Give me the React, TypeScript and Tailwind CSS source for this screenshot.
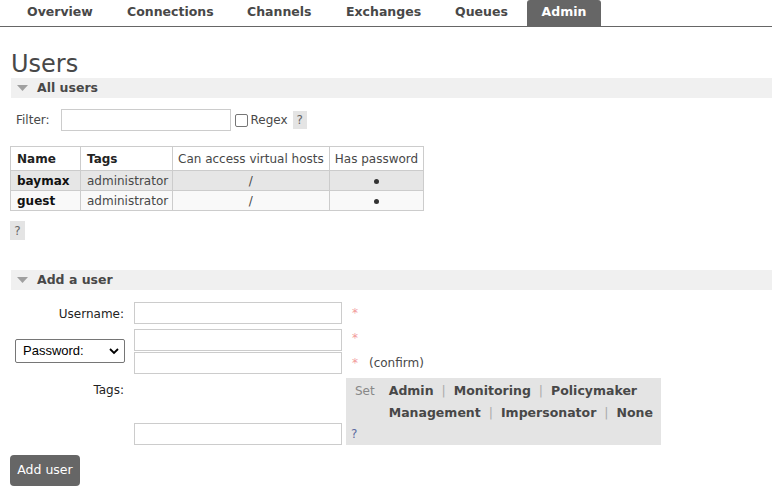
const tabs = [
  { label: "Overview", w: "w-[100px]" },
  { label: "Connections", w: "w-[120px]" },
  { label: "Channels", w: "w-[99px]" },
  { label: "Exchanges", w: "w-[109px]" },
  { label: "Queues", w: "w-[87px]" },
];

const users = [
  { name: "baymax", tags: "administrator", vhosts: "/", pw: true, shade: "bg-[#e6e6e6]" },
  { name: "guest", tags: "administrator", vhosts: "/", pw: true, shade: "bg-[#f9f9f9]" },
];

function SectionHeader({ title }: { title: string }) {
  return (
    <div className="flex items-center h-[20px] bg-[#f0f0f0] pl-[6px] gap-[9px]">
      <svg width="11" height="6" viewBox="0 0 11 6">
        <path d="M0 0 H11 L5.5 6 Z" fill="#a0a0a0" />
      </svg>
      <span className="font-bold text-[12.5px] text-[#484848]">{title}</span>
    </div>
  );
}

function Help({ className = "" }: { className?: string }) {
  return (
    <span className={`inline-flex items-center justify-center bg-[#e4e4e4] text-[#666] text-[12px] ${className}`}>?</span>
  );
}

const Star = () => <span className="text-[#f29a9a] text-[12px]">*</span>;
const Sep = () => <span className="text-[#aaa] font-normal mx-[8px]">|</span>;

export default function App() {
  return (
    <div className="w-[772px] h-[496px] overflow-hidden bg-white text-[#484848] font-['DejaVu_Sans',Verdana,sans-serif] text-[12px]">
      <nav className="flex h-[27px] border-b border-[#666] pl-[12px]">
        {tabs.map((t) => (
          <div key={t.label} className={`${t.w} pl-[15px] pt-[3px] font-bold text-[12.5px] text-[#484848]`}>
            {t.label}
          </div>
        ))}
        <div className="w-[74px] rounded-t-[3px] bg-[#666] text-white font-bold text-[12.5px] pt-[3px] text-center">
          Admin
        </div>
      </nav>

      <div className="pl-[11px]">
        <h1 className="text-[24px] leading-[28px] mt-[23px] text-[#484848] font-normal">Users</h1>
        <SectionHeader title="All users" />

        <div className="flex items-center mt-[11px] ml-[5px] h-[22px]">
          <span className="mr-[11px]">Filter:</span>
          <div className="w-[170px] h-[22px] border border-[#ccc]" />
          <span className="ml-[4px] w-[13px] h-[13px] border border-[#767676] rounded-[2px] bg-white" />
          <span className="ml-[3px]">Regex</span>
          <Help className="ml-[5px] w-[14px] h-[18px]" />
        </div>

        <table className="mt-[15px] -ml-[1px] border-collapse whitespace-nowrap">
          <thead>
            <tr className="h-[24px]">
              <th className="w-[70px] border border-[#ccc] px-[6px] text-left font-bold text-[#222]">Name</th>
              <th className="w-[92px] border border-[#ccc] pl-[6px] pr-[3px] text-left font-bold text-[#222]">Tags</th>
              <th className="w-[156px] border border-[#ccc] px-[5px] text-left font-normal">Can access virtual hosts</th>
              <th className="w-[94px] border border-[#ccc] px-[5px] text-left font-normal">Has password</th>
            </tr>
          </thead>
          <tbody>
            {users.map((u) => (
              <tr key={u.name} className={`h-[20px] ${u.shade}`}>
                <td className="border border-[#ccc] px-[6px] font-bold text-[#111]">{u.name}</td>
                <td className="border border-[#ccc] pl-[6px] pr-[3px]">{u.tags}</td>
                <td className="border border-[#ccc] text-center">{u.vhosts}</td>
                <td className="border border-[#ccc] text-center">
                  {u.pw && <span className="inline-block w-[5px] h-[5px] rounded-full bg-[#333] align-middle" />}
                </td>
              </tr>
            ))}
          </tbody>
        </table>

        <Help className="mt-[10px] -ml-[1px] w-[15px] h-[19px]" />

        <div className="mt-[30px]">
          <SectionHeader title="Add a user" />
        </div>

        <div className="grid grid-cols-[114px_208px_auto] gap-x-[10px] -ml-[1px] mt-[12px]">
          <div className="text-right self-center pt-[2px] text-[#222]">Username:</div>
          <div className="h-[22px] border border-[#ccc]" />
          <div className="pt-[2px]"><Star /></div>

          <div className="row-span-2 self-center mt-[4px] ml-[5px] flex items-center justify-between h-[24px] border border-[#767676] rounded-[2px] pl-[7px] pr-[5px] font-['Liberation_Sans',Arial,sans-serif] text-[13px] text-black w-[110px]">
            Password:
            <svg width="10" height="7" viewBox="0 0 10 7">
              <path d="M1 1 L5 5 L9 1" stroke="#000" strokeWidth="1.8" fill="none" />
            </svg>
          </div>
          <div className="mt-[5px] h-[22px] border border-[#ccc]" />
          <div className="pt-[5px]"><Star /></div>
          <div className="mt-[1px] h-[22px] border border-[#ccc]" />
          <div className="pt-[3px] flex gap-[11px]"><Star /><span>(confirm)</span></div>

          <div className="text-right pt-[7px] text-[#222]">Tags:</div>
          <div className="flex flex-col justify-end">
            <div className="h-[22px] border border-[#ccc]" />
          </div>
          <div className="mt-[4px] -ml-[6px] w-[315px] h-[67px] bg-[#e4e4e4] relative">
            <div className="flex pl-[9px] pt-[4px]">
              <span className="text-[#888] mr-[14px]">Set</span>
              <div className="font-bold text-[12.5px] text-[#484848] leading-[22px] -mt-[2px]">
                <div>
                  Admin<Sep />Monitoring<Sep />Policymaker
                </div>
                <div>
                  Management<Sep />Impersonator<Sep />None
                </div>
              </div>
            </div>
            <span className="absolute left-[5px] bottom-[2px] text-[#5a6aa0]">?</span>
          </div>
        </div>

        <button className="mt-[10px] -ml-[1px] w-[70px] h-[31px] rounded-[4px] bg-[#666] text-white text-[12.5px]">
          Add user
        </button>
      </div>
    </div>
  );
}
